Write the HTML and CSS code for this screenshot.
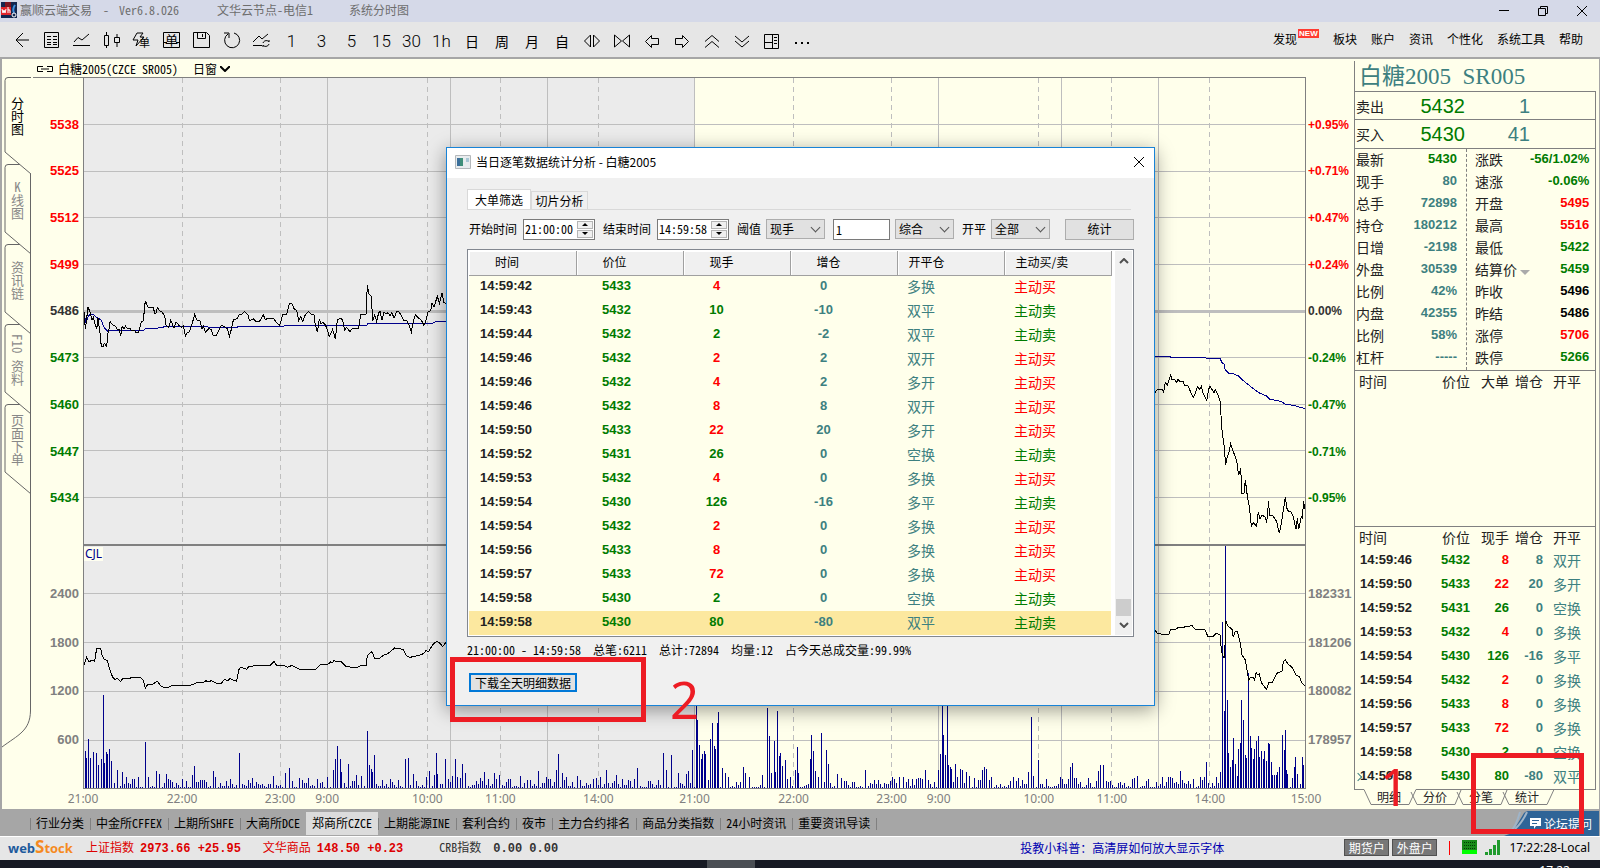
FILE: index.html
```html
<!DOCTYPE html>
<html lang="zh-CN">
<head>
<meta charset="utf-8">
<title>赢顺云端交易</title>
<link rel="stylesheet" href="styles.css">
</head>
<body>
<div class="app">
  <header class="titlebar">
    <svg class="app-logo" viewBox="0 0 16 16"><rect width="16" height="16" fill="#12264f"/><path d="M0 5h10v8H0z" fill="#e0262c"/><path d="M4 0h6v5H4z" fill="#7a1420"/><path d="M1 7l1 4 1-3 1 3 1-4M7 5v6M7 8q2-1 2 1v2" stroke="#fff" fill="none"/><path d="M14 3c-2 3-2 6-1 8" stroke="#3f8fe0" stroke-width="2" fill="none"/><circle cx="13" cy="13" r="2" fill="none" stroke="#fff"/></svg>
    <span class="t-name">赢顺云端交易</span><span class="t-dash">-</span><span class="t-ver">Ver6.8.026</span><span class="t-node">文华云节点-电信1</span><span>系统分时图</span>
    <div class="win-buttons">
      <button aria-label="最小化"><svg viewBox="0 0 12 12"><path d="M1 5.500h10"/></svg></button>
      <button aria-label="还原"><svg viewBox="0 0 12 12"><path d="M1.500 3.500h7v7h-7zM3.500 3.500v-2h7v7h-2"/></svg></button>
      <button aria-label="关闭"><svg viewBox="0 0 12 12"><path d="M1 1l10 10M11 1L1 11"/></svg></button>
    </div>
  </header>

  <nav class="toolbar">
    <div class="tools">
      <button aria-label="返回"><svg viewBox="0 0 30 30"><path d="M9 14h13M16 7l-7 7 7 7"/></svg></button>
      <button aria-label="报价"><svg viewBox="0 0 30 30"><path d="M7.500 6.500h14v15h-14zM10 10.500h4M16 10.500h4M10 13.500h4M16 13.500h4M10 16.500h4M16 16.500h4M10 18.500h4M16 18.500h4"/></svg></button>
      <button aria-label="分时"><svg viewBox="0 0 30 30"><path d="M6 19.500h17M7 16l4-4.500 4 2.500 7-6"/></svg></button>
      <button aria-label="K线"><svg viewBox="0 0 30 30"><path d="M7.500 9.500h4v10h-4zM9.500 6v3M9.500 19v3M17.500 11.500h5v5h-5zM20 8v3M20 17v4"/></svg></button>
      <button aria-label="闪电下单"><svg viewBox="0 0 30 30"><path d="M10 7h6l-3 4h4l-8 9 2-6H6z"/><text x="12" y="21" font-size="11">单</text></svg></button>
      <button aria-label="下单"><svg viewBox="0 0 30 30"><path d="M6.500 6.500h16v15h-16zM7 16.500h3M19 16.500h3"/><text x="8" y="19" font-size="13">单</text></svg></button>
      <button aria-label="保存"><svg viewBox="0 0 30 30"><path d="M6.500 6.500h13l3 3v12h-16zM10.500 6.500v6h8v-6M15.500 8v3"/></svg></button>
      <button aria-label="刷新"><svg viewBox="0 0 30 30"><path d="M17 7a7.500 7.500 0 1 1-6 1M7 7h5v5"/></svg></button>
      <button aria-label="叠加"><svg viewBox="0 0 30 30"><path d="M6 19.500h9M6 16l6-6 3 3 6-5M16 17c1-3 5-3 6-1v-2M22 18c-1 3-5 3-6 1v2"/></svg></button>
      <button class="seg">1</button><button class="seg">3</button><button class="seg">5</button><button class="seg">15</button><button class="seg">30</button><button class="seg">1h</button><button>日</button><button>周</button><button>月</button><button>自</button>
      <button aria-label="放宽"><svg viewBox="0 0 30 30"><path d="M13.500 9v12l-6-6zM16.500 9v12l6-6z"/></svg></button>
      <button aria-label="收窄"><svg viewBox="0 0 30 30"><path d="M7.500 9v12l7-6zM22.500 9v12l-7-6z"/></svg></button>
      <button aria-label="左移"><svg viewBox="0 0 30 30"><path d="M8.500 15.500l6-6v3h7v6h-7v3z"/></svg></button>
      <button aria-label="右移"><svg viewBox="0 0 30 30"><path d="M21.500 15.500l-6-6v3h-7v6h7v3z"/></svg></button>
      <button aria-label="上翻"><svg viewBox="0 0 30 30"><path d="M8 15.500l7-6 7 6M8 21.500l7-6 7 6"/></svg></button>
      <button aria-label="下翻"><svg viewBox="0 0 30 30"><path d="M8 10l7 6 7-6M8 15l7 6 7-6"/></svg></button>
      <button aria-label="版面"><svg viewBox="0 0 30 30"><path d="M7.500 8.500h14v14h-14zM15.500 8.500v14M7.500 16.500h8M17 11.500h3M17 14.500h3M17 17.500h3"/></svg></button>
      <button aria-label="更多"><svg viewBox="0 0 30 30"><path d="M8 17h2M14 17h2M20 17h2" stroke-width="2"/></svg></button>
    </div>
    <div class="menu">
      <a href="#">发现<sup>NEW</sup></a><a href="#">板块</a><a href="#">账户</a><a href="#">资讯</a><a href="#">个性化</a><a href="#">系统工具</a><a href="#">帮助</a>
    </div>
  </nav>

  <main class="workspace">
    <aside class="side-tabs">
      <svg class="side-lines" viewBox="0 0 29 750">
        <path d="M29 18.500H6q-3 0-3 3V93l26 22"/><path d="M18 105.500H6q-3 0-3 3V173l26 22"/><path d="M18 185.500H6q-3 0-3 3V253l26 22"/><path d="M18 265.500H6q-3 0-3 3V333l26 22"/><path d="M18 345.500H6q-3 0-3 3V413l26 22"/><path d="M28.500 115V652C28 672 16 676 0 688"/>
      </svg>
      <button class="active">分时图</button>
      <button><span class="upright">K</span>线图</button>
      <button>资讯链</button>
      <button>F10 资料</button>
      <button>页面下单</button>
    </aside>

    <section class="chart">
      <div class="chart-head">
        <svg class="link-icon" viewBox="0 0 16 8"><path d="M6 1.500H.500v5H6M10 1.500h5.500v5H10M4 4h8" /></svg>
        <span>白糖2005(CZCE SR005)</span>
        <button class="day">日窗<svg viewBox="0 0 10 6"><path d="M0 0l5 5 5-5"/></svg></button>
      </div>
      <div class="axis left">
        <div class="axis-price"><b class="up">5538</b><b class="up">5525</b><b class="up">5512</b><b class="up">5499</b><b>5486</b><b class="down">5473</b><b class="down">5460</b><b class="down">5447</b><b class="down">5434</b></div>
        <div class="axis-vol"><b>2400</b><b>1800</b><b>1200</b><b>600</b></div>
      </div>
      <div class="plot">
        <svg viewBox="83 78 1223 711" preserveAspectRatio="none">
          <rect x="83" y="78" width="611" height="711" fill="#ebebeb"/>
          <path class="grid-line" d="M83 124.500H1306M83 171.500H1306M83 217.500H1306M83 264.500H1306M83 357.500H1306M83 404.500H1306M83 450.500H1306M83 497.500H1306M83 593.500H1306M83 642.500H1306M83 691.500H1306M83 740.500H1306M327.500 78V789M450.500 78V789M547.500 78V789M694.500 78V789M938.500 78V789M1061.500 78V789M1158.500 78V789"/>
          <path class="grid-line dashed" d="M182.500 78V789M280.500 78V789M427.500 78V789M500.500 78V789M598.500 78V789M793.500 78V789M891.500 78V789M1038.500 78V789M1111.500 78V789M1209.500 78V789"/>
          <path class="grid-line base" d="M83 311.500H1306"/>
          <path class="split" d="M83 545H1306"/>
          <path class="bars" id="bars"/>
          <g transform="translate(0 270) scale(.33333)">
            <polyline class="avg" points="250,118 258,160 264,140 272,132 280,134 290,142 304,150 312,172 324,184 332,181 432,181 436,176 470,175 496,170 610,170 636,172 712,172 714,169 850,169 856,166 1100,166 1104,160 1298,160 1306,156 1338,154"/>
            <polyline class="line" points="250,98 256,178 264,112 270,125 276,150 280,142 284,160 290,178 294,145 300,190 304,230 310,230 313,220 320,230 324,188 328,172 330,155 338,165 346,168 352,178 358,178 362,198 366,170 372,176 376,168 382,175 390,175 396,183 404,180 408,188 416,186 422,165 424,155 430,152 434,110 436,92 444,112 460,112 464,130 468,130 472,112 478,122 486,126 494,138 498,165 506,172 512,152 516,160 522,175 528,155 536,165 544,172 550,168 556,198 562,188 568,186 574,168 578,155 584,134 590,150 600,152 606,178 610,168 616,186 626,176 634,178 640,198 648,198 654,185 664,166 676,172 682,176 688,200 694,178 700,150 712,145 716,135 726,132 734,124 744,135 748,152 760,146 768,155 778,155 790,134 796,150 802,145 820,145 830,158 838,166 842,158 848,134 860,132 868,100 876,102 882,116 890,122 896,152 902,140 908,154 916,134 926,125 934,134 942,135 946,165 952,186 958,148 962,160 970,158 976,165 982,178 988,200 994,188 998,178 1006,208 1012,150 1022,145 1028,150 1034,180 1040,172 1050,186 1056,176 1076,174 1082,134 1098,132 1102,46 1106,70 1114,80 1118,152 1124,134 1130,154 1136,128 1140,124 1146,150 1152,126 1158,132 1164,128 1170,138 1176,128 1182,145 1190,125 1196,124 1206,140 1212,152 1220,150 1228,168 1234,186 1240,155 1246,134 1256,145 1264,150 1272,166 1278,150 1284,125 1292,122 1296,100 1302,112 1312,78 1318,100 1326,70 1332,98 1338,100"/>
          </g>
          <g transform="translate(1140 330) scale(.33333)">
            <polyline class="avg" points="45,79 90,80 92,82 196,82 200,85 240,85 246,98 252,102 256,120 266,130 280,131 296,138 310,152 340,176 360,190 380,198 390,208 424,214 436,223 460,226 496,236"/>
            <polyline class="line" points="45,188 52,178 68,178 70,190 76,158 82,165 92,136 96,150 104,148 110,158 114,148 120,156 130,156 134,168 144,168 152,186 160,202 166,190 172,170 180,178 184,168 190,192 200,212 206,178 210,168 218,182 222,190 226,178 234,195 240,212 246,300 252,345 257,405 262,378 266,372 272,342 280,365 290,392 296,436 302,415 306,490 312,490 316,450 322,498 328,530 334,588 340,578 350,588 355,545 360,568 366,555 376,562 380,578 386,512 388,555 398,556 410,575 418,610 424,580 436,502 442,542 452,545 460,560 468,598 472,565 476,598 484,560 488,565 490,512 496,540"/>
          </g>
          <g transform="translate(0 540) scale(.33333)">
            <polyline class="line" points="250,382 260,352 266,364 270,366 274,360 284,364 290,325 302,326 306,345 312,358 322,362 328,385 338,412 344,418 352,416 362,424 370,414 390,415 394,412 422,412 430,422 436,444 442,435 458,432 472,424 484,440 500,444 516,436 572,436 590,428 612,426 618,422 624,426 634,422 650,430 664,430 674,418 684,422 690,416 710,424 716,390 722,382 740,388 746,380 756,380 764,376 810,376 822,364 830,376 850,376 862,382 876,376 886,382 902,390 944,390 962,374 982,374 992,366 998,368 1002,362 1010,366 1022,364 1038,380 1060,382 1070,384 1080,378 1098,378 1102,346 1114,336 1118,340 1124,355 1138,356 1150,346 1162,342 1184,324 1210,328 1218,346 1230,352 1258,346 1272,340 1278,332 1286,334 1300,312 1310,304 1318,308 1328,320 1338,306"/>
          </g>
          <g transform="translate(880 580) scale(.33333)">
            <polyline class="line" points="825,150 832,160 842,162 846,164 866,164 872,148 886,148 894,143 908,142 936,137 946,148 974,148 984,170 998,170 1008,160 1020,164 1024,210 1030,233 1034,233 1037,122 1044,138 1056,148 1060,172 1066,154 1072,154 1080,185 1086,225 1096,240 1106,300 1112,292 1120,292 1124,300 1128,278 1134,285 1138,282 1144,308 1150,316 1160,328 1166,308 1176,308 1190,280 1206,274 1210,245 1216,240 1224,252 1236,262 1248,285 1258,290 1266,310 1276,318"/>
          </g>
          <path class="frame" d="M83.500 78V789M1305.500 78V789M83 788.500H1306"/>
        </svg>
        <div class="plot-labels"><span>CJL</span></div>
      </div>
      <div class="axis right">
        <div class="axis-price"><b class="up">+0.95%</b><b class="up">+0.71%</b><b class="up">+0.47%</b><b class="up">+0.24%</b><b>0.00%</b><b class="down">-0.24%</b><b class="down">-0.47%</b><b class="down">-0.71%</b><b class="down">-0.95%</b></div>
        <div class="axis-vol"><b>182331</b><b>181206</b><b>180082</b><b>178957</b></div>
      </div>
      <div class="axis-time"><span>21:00</span><span>22:00</span><span>23:00</span><span>9:00</span><span>10:00</span><span>11:00</span><span>14:00</span><span>21:00</span><span>22:00</span><span>23:00</span><span>9:00</span><span>10:00</span><span>11:00</span><span>14:00</span><span>15:00</span></div>
    </section>

    <aside class="quote">
      <h1>白糖2005&nbsp; SR005</h1>
      <div class="quote-body">
        <div class="bidask"><span>卖出</span><em>5432</em><i>1</i></div>
        <div class="bidask"><span>买入</span><em>5430</em><i>41</i></div>
        <div class="stats">
          <dl>
            <dt>最新</dt><dd class="down">5430</dd><dt>现手</dt><dd>80</dd><dt>总手</dt><dd>72898</dd><dt>持仓</dt><dd>180212</dd><dt>日增</dt><dd>-2198</dd><dt>外盘</dt><dd>30539</dd><dt>比例</dt><dd>42%</dd><dt>内盘</dt><dd>42355</dd><dt>比例</dt><dd>58%</dd><dt>杠杆</dt><dd>-----</dd>
          </dl>
          <dl>
            <dt>涨跌</dt><dd class="down">-56/1.02%</dd><dt>速涨</dt><dd class="down">-0.06%</dd><dt>开盘</dt><dd class="up">5495</dd><dt>最高</dt><dd class="up">5516</dd><dt>最低</dt><dd class="down">5422</dd><dt class="drop">结算价</dt><dd class="down">5459</dd><dt>昨收</dt><dd class="flat">5496</dd><dt>昨结</dt><dd class="flat">5486</dd><dt>涨停</dt><dd class="up">5706</dd><dt>跌停</dt><dd class="down">5266</dd>
          </dl>
        </div>
        <div class="big-orders">
          <table class="ticks"><thead><tr><th>时间</th><th>价位</th><th>大单</th><th>增仓</th><th>开平</th></tr></thead></table>
        </div>
        <table class="ticks">
          <thead><tr><th>时间</th><th>价位</th><th>现手</th><th>增仓</th><th>开平</th></tr></thead>
          <tbody>
            <tr><td>14:59:46</td><td>5432</td><td class="up">8</td><td>8</td><td>双开</td></tr>
            <tr><td>14:59:50</td><td>5433</td><td class="up">22</td><td>20</td><td>多开</td></tr>
            <tr><td>14:59:52</td><td>5431</td><td class="down">26</td><td>0</td><td>空换</td></tr>
            <tr><td>14:59:53</td><td>5432</td><td class="up">4</td><td>0</td><td>多换</td></tr>
            <tr><td>14:59:54</td><td>5430</td><td class="down">126</td><td>-16</td><td>多平</td></tr>
            <tr><td>14:59:54</td><td>5432</td><td class="up">2</td><td>0</td><td>多换</td></tr>
            <tr><td>14:59:56</td><td>5433</td><td class="up">8</td><td>0</td><td>多换</td></tr>
            <tr><td>14:59:57</td><td>5433</td><td class="up">72</td><td>0</td><td>多换</td></tr>
            <tr><td>14:59:58</td><td>5430</td><td class="down">2</td><td>0</td><td>空换</td></tr>
            <tr class="last"><td>14:59:58</td><td>5430</td><td class="down">80</td><td>-80</td><td>双平</td></tr>
          </tbody>
        </table>
      </div>
      <div class="quote-tabs">
        <svg viewBox="0 0 242 20"><path d="M0 .500H10L17 15.500H55L62 .500H242M57 3l6 12.500H101L107 1M103 3l6 12.500H147L153 1M149 3l6 12.500H193L200 .500"/></svg>
        <button>明细</button><button>分价</button><button>分笔</button><button>统计</button>
      </div>
    </aside>
  </main>

  <nav class="boards">
    <button>行业分类</button><button>中金所CFFEX</button><button>上期所SHFE</button><button>大商所DCE</button><button class="active">郑商所CZCE</button><button>上期能源INE</button><button>套利合约</button><button>夜市</button><button>主力合约排名</button><button>商品分类指数</button><button>24小时资讯</button><button>重要资讯导读</button><i class="end"></i>
    <a class="forum" href="#"><svg class="forum-bg" viewBox="0 0 95 25" preserveAspectRatio="none"><path d="M0 25L8 22 20 2q2-2 4-2h71v25z" fill="#2f6497"/><path d="M6 21Q12 16 16 1M11 18Q18 12 23 1" stroke="#9fb4c8" stroke-width="2" fill="none"/></svg>
      <svg class="forum-icon" viewBox="0 0 11 11"><path d="M0 0h11v8H6l-2 3V8H0z" fill="#fff"/><path d="M2 2.500h7M2 5.500h5" stroke="#2f6497"/></svg><span>论坛提问</span></a>
  </nav>

  <footer class="status">
    <span class="brand"><span class="web">web</span><span class="big">S</span>tock</span>
    <span class="idx red">上证指数<b>2973.66 +25.95</b></span>
    <span class="idx red second">文华商品<b>148.50 +0.23</b></span>
    <span class="idx third">CRB指数<b>0.00 0.00</b></span>
    <a class="notice" href="#">投教小科普：高清屏如何放大显示字体</a>
    <button class="acct">期货户</button><button class="acct">外盘户</button>
    <i class="red-bar"></i>
    <svg class="screen" viewBox="0 0 16 15"><path d="M0 0h15v14H0z" fill="#188a18"/><path d="M0 10h15v4H0z" fill="#0f0"/><path d="M2 2.500h12M2 5.500h12M2 8.500h12" stroke="#003c00" stroke-dasharray="1 1"/></svg>
    <svg class="signal" viewBox="0 0 16 15"><path d="M1.500 15v-3M5.500 15V9M9.500 15V5M13.500 15V0" stroke="#1f9a2d" stroke-width="3"/></svg>
    <span class="clock">17:22:28-Local</span>
  </footer>
  <div class="taskbar"><i></i><span>17:22</span></div>
</div>

<div class="dialog" role="dialog" aria-labelledby="dlg-title">
  <div class="dlg-title">
    <svg class="dlg-icon" viewBox="0 0 16 14"><path d="M.500.500h15v13H.500z" fill="#e8ecee" stroke="#b4b8bb"/><path d="M2 3h6v8H2z" fill="#3f8f7a"/><path d="M2 3h3v8H2z" fill="#3b6f9a"/><path d="M11 3h3v4h-3z" fill="#a9c7d6"/></svg>
    <span id="dlg-title">当日逐笔数据统计分析 - 白糖2005</span>
    <button class="close" aria-label="关闭"><svg viewBox="0 0 12 12"><path d="M1 1l10 10M11 1L1 11"/></svg></button>
  </div>
  <div class="dlg-body">
    <div class="dlg-tabs"><button class="active">大单筛选</button><button>切片分析</button></div>
    <form class="filters" onsubmit="return false">
      <label for="t1">开始时间</label>
      <span class="spin"><input id="t1" type="text" value="21:00:00"><span class="arrows"><button type="button" aria-label="增加"></button><button type="button" class="dn" aria-label="减少"></button></span></span>
      <label for="t2">结束时间</label>
      <span class="spin"><input id="t2" type="text" value="14:59:58"><span class="arrows"><button type="button" aria-label="增加"></button><button type="button" class="dn" aria-label="减少"></button></span></span>
      <label for="s1">阈值</label>
      <span class="sel"><select id="s1"><option>现手</option></select></span>
      <input class="num" type="text" value="1" aria-label="阈值数量">
      <span class="sel"><select aria-label="类型"><option>综合</option></select></span>
      <label for="s3">开平</label>
      <span class="sel"><select id="s3"><option>全部</option></select></span>
      <button class="go" type="button">统计</button>
    </form>
    <div class="list">
      <table>
        <thead><tr><th>时间</th><th>价位</th><th>现手</th><th>增仓</th><th>开平仓</th><th>主动买/卖</th></tr></thead>
        <tbody>
          <tr><td>14:59:42</td><td>5433</td><td class="up">4</td><td>0</td><td>多换</td><td class="up">主动买</td></tr>
          <tr><td>14:59:43</td><td>5432</td><td class="down">10</td><td>-10</td><td>双平</td><td class="down">主动卖</td></tr>
          <tr><td>14:59:44</td><td>5432</td><td class="down">2</td><td>-2</td><td>双平</td><td class="down">主动卖</td></tr>
          <tr><td>14:59:46</td><td>5432</td><td class="up">2</td><td>2</td><td>双开</td><td class="up">主动买</td></tr>
          <tr><td>14:59:46</td><td>5432</td><td class="up">4</td><td>2</td><td>多开</td><td class="up">主动买</td></tr>
          <tr><td>14:59:46</td><td>5432</td><td class="up">8</td><td>8</td><td>双开</td><td class="up">主动买</td></tr>
          <tr><td>14:59:50</td><td>5433</td><td class="up">22</td><td>20</td><td>多开</td><td class="up">主动买</td></tr>
          <tr><td>14:59:52</td><td>5431</td><td class="down">26</td><td>0</td><td>空换</td><td class="down">主动卖</td></tr>
          <tr><td>14:59:53</td><td>5432</td><td class="up">4</td><td>0</td><td>多换</td><td class="up">主动买</td></tr>
          <tr><td>14:59:54</td><td>5430</td><td class="down">126</td><td>-16</td><td>多平</td><td class="down">主动卖</td></tr>
          <tr><td>14:59:54</td><td>5432</td><td class="up">2</td><td>0</td><td>多换</td><td class="up">主动买</td></tr>
          <tr><td>14:59:56</td><td>5433</td><td class="up">8</td><td>0</td><td>多换</td><td class="up">主动买</td></tr>
          <tr><td>14:59:57</td><td>5433</td><td class="up">72</td><td>0</td><td>多换</td><td class="up">主动买</td></tr>
          <tr><td>14:59:58</td><td>5430</td><td class="down">2</td><td>0</td><td>空换</td><td class="down">主动卖</td></tr>
          <tr class="selected"><td>14:59:58</td><td>5430</td><td class="down">80</td><td>-80</td><td>双平</td><td class="down">主动卖</td></tr>
        </tbody>
      </table>
      <div class="scrollbar"><svg viewBox="0 0 10 6"><path d="M1 5l4-4 4 4"/></svg><i></i><svg viewBox="0 0 10 6"><path d="M1 1l4 4 4-4"/></svg></div>
    </div>
    <p class="summary"><span>21:00:00 - 14:59:58</span><span>总笔:6211</span><span>总计:72894</span><span>均量:12</span><span>占今天总成交量:99.99%</span></p>
    <button class="download">下载全天明细数据</button>
  </div>
</div>

<div class="mark mark-download"></div><span class="mark-num two">2</span>
<div class="mark mark-stats"></div><span class="mark-num one">1</span>
<script src="chart.js"></script>
</body>
</html>
```

FILE: styles.css
```css
* { box-sizing: border-box; }
body {
  margin: 0;
  overflow: hidden;
  font: 12px/16px "Noto Sans Mono CJK SC", "Noto Sans CJK SC", sans-serif;
  color: #000;
}
button { padding: 0; border: 0; background: none; font: inherit; color: inherit; white-space: nowrap; }
a { color: inherit; text-decoration: none; }
p, h1, dl, dd { margin: 0; }
svg { display: block; fill: none; stroke: #000; stroke-width: 1; }
table { border-collapse: collapse; }
.up { color: #f00; }
.down { color: #007b00; }
.app { display: flex; flex-direction: column; height: 100vh; position: relative; }

/* title bar and toolbar */
.titlebar { display: flex; align-items: center; height: 22px; background: #d5d9e8; color: #6e6e6e; white-space: nowrap; padding: 0 0 2px 1px; }
.app-logo { width: 16px; height: 16px; stroke: none; }
.t-name { margin-left: 3px; }
.t-dash { margin: 0 10px 0 11px; }
.t-node { margin: 0 36px 0 38px; }
.win-buttons { display: flex; margin-left: auto; gap: 27px; padding: 2px 12px 0 0; }
.win-buttons svg, .close svg { width: 12px; height: 12px; }
.toolbar { display: flex; justify-content: space-between; height: 37px; background: #e6e6e6; border-bottom: 2px solid #a6a6a6; padding: 0 17px 0 7px; }
.tools { display: flex; padding-top: 4px; }
.tools button { width: 30px; height: 30px; font-size: 14px; }
.tools svg { width: 30px; height: 30px; }
.tools text { fill: #000; stroke: none; }
.tools .seg { font-family: Roboto, sans-serif; font-size: 17px; font-weight: 300; padding-right: 1px; }
.menu { display: flex; gap: 14px; align-items: center; padding-bottom: 2px; }
.menu a { display: flex; }
.menu sup { width: 21px; height: 9px; margin-left: 1px; margin-top: -2px; background: #ff3b30; color: #fff; font: bold 8px/9px "Liberation Sans", sans-serif; text-align: center; }

/* workspace */
.workspace { flex: 1; min-height: 0; display: flex; background: #ffffeb; border-left: 2px solid #a6a6a6; border-right: 1px solid #a6a6a6; }
.side-tabs { position: relative; width: 29px; padding-top: 18px; display: flex; flex-direction: column; overflow: hidden; }
.side-lines { position: absolute; left: 0; top: 0; width: 29px; height: 750px; stroke: #666; }
.side-tabs button { position: relative; width: 29px; height: 80px; padding-left: 2px; writing-mode: vertical-rl; font-size: 13px; color: #888; padding-bottom: 8px; line-height: 25px; }
.side-tabs .active { height: 87px; color: #000; }
.upright { text-orientation: upright; }
.chart { flex: 1; min-width: 0; display: grid; grid-template-columns: 52px 1fr 48px; grid-template-rows: 19px 1fr 20px; }
.chart-head { grid-column: 1 / -1; display: flex; align-items: center; padding-left: 6px; }
.link-icon { width: 16px; height: 8px; margin-right: 5px; }
.day { display: flex; align-items: center; gap: 3px; margin-left: 15px; }
.day svg { width: 10px; height: 6px; stroke-width: 2; }
.axis { display: grid; grid-template-rows: 467fr 244fr; font: bold 13px/14px "Liberation Sans", sans-serif; color: #333; }
.axis-price, .axis-vol { display: grid; align-items: center; }
.axis-price { grid-template-rows: 1fr repeat(9, 2fr) 1fr; }
.axis-vol { grid-template-rows: 1fr repeat(4, 2fr) 1fr; color: #808080; }
.axis-price::before, .axis-vol::before { content: ""; }
.left { text-align: right; }
.left b { padding-right: 4px; }
.right .axis-price { font-size: 12px; }
.right b { padding-left: 2px; }
.left .axis-price, .left + .plot { border-top: 1px solid #808080; margin-top: -1px; }
.left .axis-price { margin-left: 2px; }
.plot { position: relative; min-height: 0; }
.plot > svg { width: 100%; height: 100%; shape-rendering: crispEdges; stroke: none; }
.plot path, .plot polyline { vector-effect: non-scaling-stroke; }
.grid-line { stroke: #bebebe; }
.dashed { stroke-dasharray: 5 4; }
.base { stroke-width: 3; }
.split { stroke: #808080; stroke-width: 2; }
.frame { stroke: #808080; }
.bars { stroke: #00008b; }
.avg { stroke: #00008b; }
.line { stroke: #000; }
.plot-labels { position: absolute; inset: 0; display: grid; grid-template-rows: 468fr 243fr; pointer-events: none; }
.plot-labels span { grid-row: 2; justify-self: start; align-self: start; margin: 1px; padding: 0 1px; background: #fffff0; color: #00008b; font: 12px/14px "Noto Sans", sans-serif; }
.axis-time { grid-column: 2; display: grid; grid-template-columns: 99fr 98fr 47fr 100fr 73fr 98fr 96fr 99fr 98fr 47fr 100fr 73fr 98fr 96fr 0; color: #808080; font: 12px/19px "Noto Sans", sans-serif; }
.axis-time span { width: 0; display: flex; justify-content: center; }

/* quote panel */
.quote { width: 242px; margin-right: 3px; padding-top: 2px; display: flex; flex-direction: column; font-size: 14px; color: #222; }
.quote h1 { height: 30px; border-left: 1px solid #808080; padding-left: 4px; font: 23px/32px "Liberation Serif", "Noto Sans CJK SC", serif; color: #3d8080; white-space: nowrap; }
.quote-body { flex: 1; border: solid #808080; border-width: 1px 1px 0; display: flex; flex-direction: column; padding-bottom: 1px; }
.bidask { height: 29px; display: grid; grid-template-columns: 47px 62px 65px; align-items: center; border-bottom: 1px solid #808080; padding-left: 1px; }
.bidask:first-child { height: 28px; }
.bidask em, .bidask i { font: 20px/22px "Liberation Sans", sans-serif; text-align: right; color: #3d8080; }
.bidask em { color: #007b00; }
.stats { display: grid; grid-template-columns: 111px 1fr; border-bottom: 1px solid #808080; }
.stats dl { display: grid; grid-template-columns: auto 1fr; grid-auto-rows: 22px; align-items: center; padding: 0 9px 1px 1px; }
.stats dl + dl { border-left: 1px dashed #808080; padding-left: 8px; }
.stats dt { line-height: 16px; padding-bottom: 2px; white-space: nowrap; }
.stats dd { text-align: right; padding-bottom: 2px; font: bold 13px/16px "Liberation Sans", sans-serif; color: #3d8080; }
.stats .up { color: #f00; }
.stats .down { color: #007b00; }
.stats .flat { color: #000; }
.drop::after { content: ""; display: inline-block; margin-left: 3px; border: 5px solid transparent; border-top-color: #aaa; border-bottom: 0; }
.big-orders { flex: 1; border-bottom: 1px solid #808080; }
.ticks { width: 100%; table-layout: fixed; }
.ticks tr { height: 24px; }
.ticks thead tr { height: 22px; }
.ticks th { font-weight: normal; text-align: right; padding: 0 0 2px; line-height: 18px; }
.ticks td { padding: 0 0 2px; text-align: right; font: bold 13px/16px "Liberation Sans", sans-serif; color: #3d8080; }
.ticks th:nth-child(1), .ticks td:nth-child(1) { width: 70px; text-align: left; padding-left: 4px; }
.ticks td:nth-child(1) { color: #222; padding-left: 5px; }
.ticks th:nth-child(2) { width: 45px; }
.ticks td:nth-child(2) { color: #007b00; }
.ticks th:nth-child(3) { width: 39px; }
.ticks th:nth-child(4) { width: 34px; }
.ticks th:nth-child(5), .ticks td:nth-child(5) { padding-right: 14px; font-family: "Noto Sans CJK SC", sans-serif; font-size: 14px; font-weight: normal; }
.ticks .up { color: #f00; }
.ticks .down { color: #007b00; }
.ticks .last td:first-child { position: relative; }
.ticks .last td:first-child::before { content: ""; position: absolute; left: 0; top: 9px; width: 5px; height: 5px; border: solid #3d8080; border-width: 1px 1px 0 0; transform: rotate(45deg); }
.quote-tabs { position: relative; height: 20px; display: flex; font-size: 12px; padding-left: 12px; margin-top: -1px; }
.quote-tabs svg { position: absolute; left: 0; top: 0; width: 242px; height: 20px; stroke: #808080; }
.quote-tabs button { position: relative; width: 46px; height: 16px; line-height: 16px; }

/* bottom bars */
.boards { display: flex; height: 27px; background: #a6a6a6; padding: 3px 0 1px 30px; }
.boards button { padding: 0 6px 2px 5px; border-left: 1px solid transparent; background: linear-gradient(#808080, #808080) 0 6px / 1px 12px no-repeat; background-origin: border-box; }
.boards .active { background: #dcdcdc; }
.boards .end { width: 1px; height: 12px; margin-top: 6px; background: #808080; }
.forum { position: relative; margin: -1px 1px 0 auto; width: 95px; height: 25px; display: flex; align-items: center; color: #fff; padding-left: 26px; gap: 3px; }
.forum-bg { position: absolute; left: 0; top: 0; width: 95px; height: 25px; stroke: none; }
.forum-icon { position: relative; width: 11px; height: 11px; stroke: none; }
.forum span { position: relative; }
.status { display: flex; align-items: center; height: 24px; background: #e6e6e6; border-top: 1px solid #fff; padding: 0 10px 2px 8px; color: #333; white-space: nowrap; }
.brand { width: 78px; font: bold 13px/20px "Open Sans", sans-serif; color: #f58a1f; }
.web { color: #1d5a9c; }
.big { font-size: 17px; }
.idx b { margin-left: 6px; font-family: "Liberation Mono", monospace; }
.red { color: #dd0000; }
.second { margin-left: 22px; }
.third { margin-left: 36px; }
.third b { margin-left: 12px; }
.notice { margin: 0 120px 0 auto; color: #0000b0; font-weight: 500; }
.acct { width: 45px; height: 17px; margin-right: 3px; border: 1px solid #505050; background: #777; color: #fff; line-height: 14px; }
.red-bar { width: 1px; height: 14px; margin: 0 12px 0 9px; background: #f00; }
.screen { width: 16px; height: 15px; stroke: none; margin-right: 7px; }
.signal { width: 16px; height: 15px; margin-right: 8px; }
.clock { font: 12px/16px "Noto Sans", sans-serif; color: #000; }
.taskbar { position: relative; height: 8px; overflow: hidden; background: #171a24; display: flex; justify-content: space-between; padding: 0 30px 0 44.200%; }
.taskbar i { width: 48px; background: #4a4e54; }
.taskbar span { color: #fff; font: 12px/16px "Noto Sans", sans-serif; padding-top: 3px; }

/* dialog */
.dialog { position: absolute; left: 446px; top: 147px; width: 709px; background: #f0f0f0; border: 1px solid #1883d7; box-shadow: 0 4px 18px rgba(0, 0, 0, .4); }
.dlg-title { display: flex; align-items: center; height: 30px; background: #fff; padding: 0 9px 2px 8px; font-family: "Noto Sans CJK SC", sans-serif; }
.dlg-icon { width: 16px; height: 14px; margin-right: 5px; stroke: none; }
.close { margin-left: auto; }
.dlg-body { padding: 11px 20px 13px; }
.dlg-tabs { display: flex; align-items: flex-end; width: 664px; border-bottom: 1px solid #d9d9d9; }
.dlg-tabs button { border: 1px solid #d9d9d9; border-bottom: 0; width: 57px; height: 18px; line-height: 17px; }
.dlg-tabs .active { width: 64px; height: 20px; background: #fff; line-height: 17px; }
.filters { display: flex; align-items: center; margin-top: 8px; padding-left: 2px; height: 22px; }
.filters label { flex: none; margin-right: 6px; line-height: 16px; padding-bottom: 1px; white-space: nowrap; }
.filters .spin + label { margin-left: 8px; }
.filters label[for="s3"] { margin-left: 8px; }
.filters label[for="s1"], .filters label[for="s3"] { margin-right: 5px; }
.spin { flex: none; display: flex; width: 72px; height: 21px; border: 1px solid #7a7a7a; background: #fff; padding: 1px; }
.spin input { width: 52px; border: 0; padding: 0; background: none; font: inherit; }
.arrows { display: flex; flex-direction: column; gap: 1px; width: 16px; margin-left: auto; }
.arrows button { flex: 1; display: flex; align-items: center; justify-content: center; border: 1px solid #b5b5b5; background: #f0f0f0; }
.arrows button::before { content: ""; border: 3px solid transparent; border-top: 0; border-bottom-color: #000; }
.arrows .dn::before { border: 3px solid transparent; border-bottom: 0; border-top-color: #000; }
.sel { flex: none; position: relative; display: flex; width: 59px; height: 20px; }
.sel select { appearance: none; width: 100%; border: 1px solid #adadad; border-radius: 0; background: #e1e1e1; padding: 0 3px; font: inherit; color: #000; }
.sel::after { content: ""; position: absolute; right: 6px; top: 5px; width: 6px; height: 6px; border: solid #555; border-width: 0 1px 1px 0; transform: rotate(45deg); }
.num { flex: none; width: 57px; height: 21px; margin: 0 5px 0 8px; border: 1px solid #7a7a7a; padding: 0 2px; font: inherit; }
.go { width: 70px; height: 21px; margin-left: 15px; border: 1px solid #adadad; background: #e1e1e1; }
.list { display: flex; width: 667px; margin-top: 9px; border: 1px solid #828790; padding: 1px; background: #fff; }
.list table { table-layout: fixed; width: 642px; }
.list th { width: 107px; height: 24px; padding: 0 0 1px 26px; background: #f0f0f0; border-right: 1px solid #a0a0a0; border-bottom: 1px solid #a0a0a0; box-shadow: inset 1px 1px 0 #fff; font-family: "Noto Sans CJK SC", sans-serif; font-weight: normal; text-align: left; line-height: 14px; }
.list th:nth-child(n+5) { padding-left: 11px; }
.list tbody { background: #ffffeb; }
.list tbody tr { height: 24px; }
.list td { padding: 0 0 2px; font: bold 13px/16px "Liberation Sans", sans-serif; color: #3d8080; }
.list td:nth-child(1) { padding-left: 11px; color: #222; }
.list td:nth-child(2) { padding-left: 26px; color: #007b00; }
.list td:nth-child(3), .list td:nth-child(4) { padding-right: 40px; text-align: center; }
.list td:nth-child(n+5) { padding-left: 10px; font-family: "Noto Sans CJK SC", sans-serif; font-size: 14px; font-weight: normal; }
.list .up { color: #f00; }
.list td.down { color: #007b00; }
.list .selected { background: #fce89f; }
.scrollbar { width: 17px; margin-left: auto; background: #f0f0f0; display: flex; flex-direction: column; align-items: center; padding: 7px 0; }
.scrollbar svg { width: 10px; height: 6px; stroke: #505050; stroke-width: 2; }
.scrollbar i { width: 15px; height: 17px; margin: auto 0 6px; background: #cdcdcd; }
.summary { display: flex; gap: 12px; padding-top: 5px; line-height: 16px; white-space: nowrap; }
.download { display: block; width: 108px; height: 19px; margin: 15px 0 0 2px; border: 2px solid #0078d7; background: #e1e1e1; line-height: 15px; }

/* annotations over the window */
.mark { position: absolute; border: 5px solid #ed1c24; }
.mark-download { left: 450px; top: 657px; width: 196px; height: 65px; }
.mark-stats { right: 16px; top: 753px; width: 113px; height: 81px; }
.mark-num { position: absolute; font: 51px/52px "Noto Sans", sans-serif; color: #ed1c24; }
.two { left: 670px; top: 673px; }
.one { right: 191px; top: 760px; }
```

FILE: chart.js
```js
// Volume peaks: [origin x, baseline, "x:top ..."] in thirds of a chart unit.
const groups = [
  [0, 747, "256:632 260:655 265:597 271:655 280:636 289:640 295:675 304:657 310:465 313:669 319:637 322:642 328:628 334:663 352:690 367:697 436:606 469:693 478:702 499:702 583:678 577:705 640:693 646:710 718:640 757:714 820:708 856:699 868:684 898:714 952:717 982:710 1000:690 1006:657 1012:618 1021:657 1024:696 1045:672 1069:705 1084:708 1102:573 1108:675 1114:687 1117:697 1123:645 1216:657 1225:654 1240:702 1288:693 1303:706 1309:640 1312:702 1336:657"],
  [440, 627, "16:538 37:588 46:537 52:591 67:552 76:580 133:576 163:579 178:585 241:588 262:600 295:573 319:590 349:570 355:522 367:579 379:591 412:588 460:598 499:570 529:585 592:564 670:519 679:570 694:525 715:579 739:582 745:573 757:510 769:378 772:420 778:495 784:537 787:522 793:513 796:522 811:477 817:429 823:498 826:507 832:429 835:396 847:564 856:579 910:561 916:579 928:591 967:585 982:384 988:468 994:579 1003:483 1006:576 1012:393 1018:528 1021:519 1027:558 1036:540 1042:597 1066:570 1072:501 1075:579 1111:537 1114:465 1120:513 1126:573 1144:459 1159:510 1165:552 1192:582 1204:594 1276:570"],
  [880, 627, "43:597 58:591 70:591 136:570 127:597 175:570 181:522 187:378 190:465 196:525 202:378 205:555 211:561 214:567 220:606 226:552 232:591 241:567 247:570 259:576 268:588 307:570 313:561 319:567 328:600 334:590 400:591 445:576 454:411 460:588 475:540 499:598 547:597 571:561 577:549 655:573 661:555 670:555 772:588 871:591 901:573 940:598 979:546 1021:576 1027:126 1033:394 1036:-102 1042:360 1045:519 1051:560 1057:540 1060:474 1066:552 1072:588 1075:507 1081:489 1084:360 1090:420 1096:525 1099:534 1105:280 1111:468 1114:504 1120:537 1123:507 1129:483 1135:468 1138:531 1144:513 1150:537 1153:513 1159:543 1165:489 1168:492 1174:546 1177:585 1183:585 1189:585 1192:576 1198:561 1207:465 1213:510 1216:450 1219:570 1222:582 1243:561 1246:531 1252:582 1267:531 1270:555 1275:483"]
];
const peaks = new Map();
for (const [origin, base, list] of groups) {
  for (const item of list.split(" ")) {
    const [x, top] = item.split(":").map(Number);
    peaks.set(origin + Math.floor(x / 3), (base - top) / 3);
  }
}
// Quiet minutes between the peaks.
let seed = 7;
const next = () => (seed = (seed * 1103515245 + 12345) % 2147483648) / 2147483648;
for (let x = 84; x < 1305; x += 2) {
  if (peaks.has(x) || peaks.has(x - 1) || peaks.has(x + 1)) continue;
  const r = next();
  peaks.set(x, 2 + r * r * 10);
}
let d = "";
for (const [x, h] of peaks) d += `M${x + 0.5} 789V${(789 - h).toFixed(1)}`;
document.getElementById("bars").setAttribute("d", d);
```
